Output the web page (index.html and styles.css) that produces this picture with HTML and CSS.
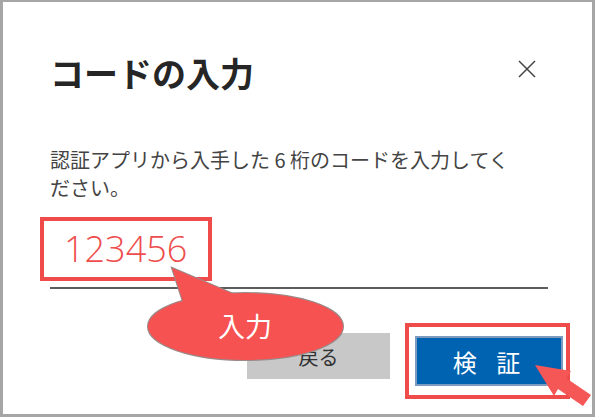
FILE: index.html
```html
<!DOCTYPE html>
<html lang="ja">
<head>
  <meta charset="UTF-8" />
  <title>コードの入力</title>
  <link rel="stylesheet" href="styles.css">
</head>
<body>
  <div class="frame">
    <div class="dialog">
      <div class="dialog-head">
        <h1>コードの入力</h1>
        <span class="close">
          <svg width="18" height="18" viewBox="0 0 18 18"><path d="M1 1L17 17M17 1L1 17" /></svg>
        </span>
      </div>

      <p class="desc">認証アプリから入手した 6 桁のコードを入力してく<br>ださい。</p>

      <div class="field">
        <span class="mark">123456</span>
      </div>

      <div class="actions">
        <button class="btn-back">戻る</button>
        <div class="mark-box">
          <button class="btn-verify">検 証</button>
        </div>
      </div>
    </div>
  </div>

  <div class="bubble">
    <svg width="210" height="105" viewBox="140 262 210 105">
      <g class="bubble-line">
        <ellipse cx="245.5" cy="326.5" rx="97.5" ry="33.5" />
        <polygon points="172,268 236,295 186,311" />
      </g>
      <g class="bubble-fill">
        <ellipse cx="245.5" cy="326.5" rx="97.5" ry="33.5" />
        <polygon points="172,268 236,295 186,311" />
      </g>
    </svg>
    <span class="bubble-text">入力</span>
  </div>

  <svg class="pointer" width="595" height="417" viewBox="0 0 595 417">
    <polygon points="535,365 571,371 566,378 591,395 583,406 558,389 554,396" />
  </svg>
</body>
</html>
```

FILE: styles.css
```css
body {
  margin: 0;
  position: relative;
  width: 595px;
  height: 417px;
  overflow: hidden;
  font-family: "Noto Sans CJK JP", "Noto Sans", sans-serif;
  background: #fff;
  color: #333;
}
.frame {
  box-sizing: border-box;
  width: 595px;
  height: 417px;
  border: 3px solid #a6a6a6;
  border-top-width: 2px;
  background: #fff;
}
.dialog {
  padding: 0 44px 0 47px;
}
.dialog-head {
  display: flex;
  justify-content: space-between;
  align-items: center;
  padding-top: 51px;
}
.dialog-head h1 {
  margin: 0;
  font-size: 34px;
  line-height: 40px;
  font-weight: bold;
  color: #262626;
}
.close {
  display: flex;
  margin: 0 12px 8px 0;
}
.close path {
  stroke: #444;
  stroke-width: 1.5;
  fill: none;
}
.desc {
  margin: 53px 0 0;
  font-size: 20px;
  line-height: 28px;
  color: #444;
}
.field {
  margin-top: 15px;
  padding-bottom: 6px;
  border-bottom: 2px solid #5c5c5c;
}
.mark {
  display: inline-block;
  box-sizing: border-box;
  width: 172px;
  height: 64px;
  margin-left: -10px;
  padding-left: 20px;
  border: 4px solid #ef4b4b;
  font-family: "Segoe UI", "Open Sans", sans-serif;
  font-weight: 300;
  font-size: 36px;
  line-height: 56px;
  color: #ee4d4d;
}
.actions {
  display: flex;
  justify-content: flex-end;
  align-items: flex-start;
  margin: 34px -22px 0 0;
}
.btn-back {
  width: 143px;
  height: 46px;
  margin-top: 10px;
  border: 0;
  background: #c8c8c8;
  font-family: inherit;
  font-size: 20px;
  color: #333;
}
.mark-box {
  margin-left: 15px;
  padding: 9px 3px 9px 6px;
  border: 4px solid #ef4b4b;
}
.btn-verify {
  display: block;
  width: 148px;
  height: 50px;
  padding-left: 8px;
  border: 2px solid #7b9cc0;
  background: #0063b1;
  font-family: inherit;
  font-size: 24px;
  letter-spacing: 7px;
  color: #fff;
}
.bubble {
  position: absolute;
  left: 140px;
  top: 262px;
  width: 210px;
  height: 105px;
}
.bubble svg {
  position: absolute;
  left: 0;
  top: 0;
}
.bubble-line {
  fill: #f65252;
  stroke: #9a8a8a;
  stroke-width: 2;
}
.bubble-fill {
  fill: #f65252;
}
.bubble-text {
  position: absolute;
  left: 78px;
  top: 46px;
  font-size: 27px;
  line-height: 36px;
  color: #fff;
}
.pointer {
  position: absolute;
  left: 0;
  top: 0;
  pointer-events: none;
}
.pointer polygon {
  fill: #f55656;
}
```
